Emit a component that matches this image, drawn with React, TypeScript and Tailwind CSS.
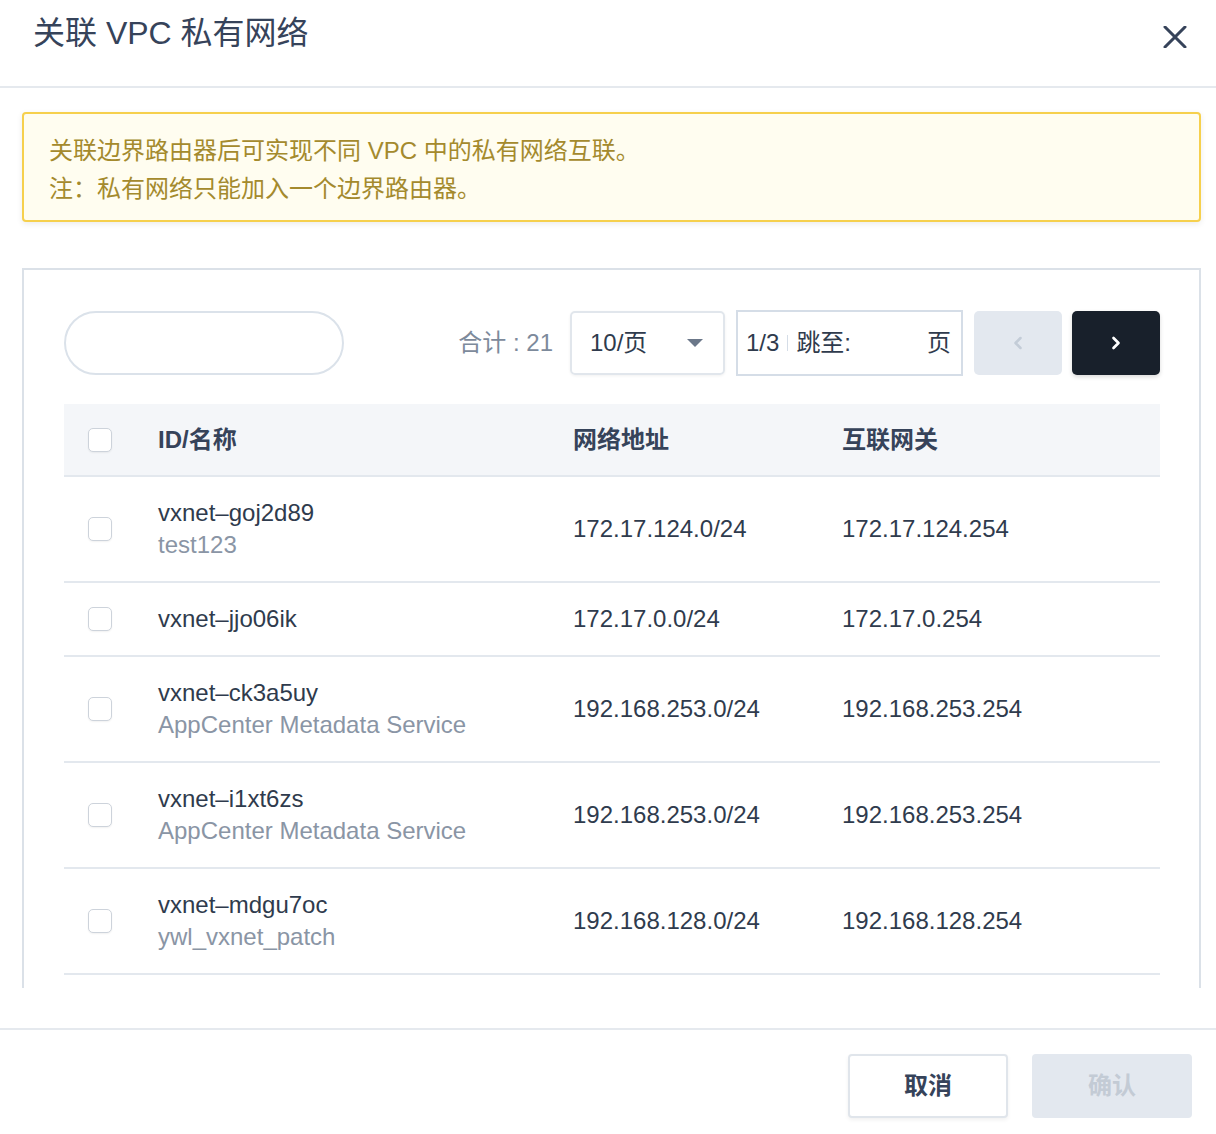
import { ChevronLeft, ChevronRight } from "lucide-react";

type Vxnet = {
  id: string;
  name?: string;
  address: string;
  gateway: string;
};

const vxnets: Vxnet[] = [
  { id: "vxnet–goj2d89", name: "test123", address: "172.17.124.0/24", gateway: "172.17.124.254" },
  { id: "vxnet–jjo06ik", address: "172.17.0.0/24", gateway: "172.17.0.254" },
  { id: "vxnet–ck3a5uy", name: "AppCenter Metadata Service", address: "192.168.253.0/24", gateway: "192.168.253.254" },
  { id: "vxnet–i1xt6zs", name: "AppCenter Metadata Service", address: "192.168.253.0/24", gateway: "192.168.253.254" },
  { id: "vxnet–mdgu7oc", name: "ywl_vxnet_patch", address: "192.168.128.0/24", gateway: "192.168.128.254" },
];

const Checkbox = () => (
  <span className="block h-[24px] w-[24px] rounded-[5px] border-[1.5px] border-[#cdd3db] bg-white shadow-[0_1px_2px_rgba(0,0,0,0.06)]" />
);

const App = () => {
  return (
    <div
      className="w-[1216px] h-[1134px] bg-white text-[#2f3b4d] overflow-hidden"
      style={{ fontFamily: '"Liberation Sans", "Noto Sans CJK SC", sans-serif' }}
    >
      {/* Header */}
      <div className="h-[88px] border-b-2 border-[#e5e9ee] flex items-start justify-between pl-[33px] pr-[25px] pt-[13px]">
        <h1 className="text-[32px] leading-[40px] text-[#36435a]">关联 VPC 私有网络</h1>
        <button className="mt-[9px] p-1">
          <svg width="24" height="22" viewBox="0 0 24 22">
            <path d="M2 1 L22 21 M22 1 L2 21" stroke="#36435a" strokeWidth="3" strokeLinecap="round" />
          </svg>
        </button>
      </div>

      {/* Body */}
      <div className="h-[900px] overflow-hidden pl-[22px] pr-[15px] pt-[24px]">
        <div className="rounded-[4px] border-2 border-[#f6d04d] bg-[#fffdf0] shadow-[0_2px_6px_rgba(0,0,0,0.08)] pl-[25px] pt-[18px] pb-[12px] text-[24px] leading-[38px] text-[#a48a2d]">
          <p>关联边界路由器后可实现不同 VPC 中的私有网络互联。</p>
          <p>注：私有网络只能加入一个边界路由器。</p>
        </div>

        <div className="mt-[46px] border-2 border-[#dbe1e8] pl-[40px] pr-[39px] pt-[40px] pb-[40px]">
          {/* Toolbar */}
          <div className="flex items-center justify-between">
            <input className="w-[280px] h-[64px] rounded-full border-2 border-[#dbe2ea] outline-none px-6 text-[24px]" />
            <div className="flex items-center">
              <span className="text-[24px] text-[#7d8a9b] mr-[17px]">合计 : 21</span>
              <div className="w-[155px] h-[64px] rounded-[5px] border-2 border-[#e1e6ec] shadow-[0_1px_3px_rgba(0,0,0,0.06)] flex items-center justify-between pl-[18px] pr-[20px]">
                <span className="text-[24px]">10/页</span>
                <svg width="16" height="8" viewBox="0 0 16 8">
                  <polygon points="0,0 16,0 8,8" fill="#6b7789" />
                </svg>
              </div>
              <div className="ml-[11px] w-[227px] h-[66px] border-2 border-[#d5dde7] flex items-center pl-[8px] pr-[10px] text-[24px]">
                <span>1/3</span>
                <span className="mx-[8px] h-[16px] w-[1px] bg-[#d5dde7]" />
                <span>跳至:</span>
                <span className="ml-auto">页</span>
              </div>
              <button className="ml-[11px] w-[88px] h-[64px] rounded-[5px] bg-[#e3e8ef] flex items-center justify-center">
                <ChevronLeft size={20} strokeWidth={3} color="#c3ccd7" />
              </button>
              <button className="ml-[10px] w-[88px] h-[64px] rounded-[5px] bg-[#18202b] shadow-[0_2px_4px_rgba(0,0,0,0.15)] flex items-center justify-center">
                <ChevronRight size={20} strokeWidth={3.2} color="#ffffff" />
              </button>
            </div>
          </div>

          {/* Table */}
          <div className="mt-[28px]">
            <div className="h-[73px] bg-[#f4f6f9] border-b-2 border-[#e3e8ee] flex items-center text-[24px] font-bold text-[#36435a]">
              <div className="w-[94px] pl-[24px]">
                <Checkbox />
              </div>
              <div className="w-[415px]">ID/名称</div>
              <div className="w-[269px]">网络地址</div>
              <div>互联网关</div>
            </div>
            {vxnets.map((v) => (
              <div key={v.id} className="flex items-center border-b-2 border-[#e3e8ee] py-[20px] text-[24px] leading-[32px]">
                <div className="w-[94px] pl-[24px]">
                  <Checkbox />
                </div>
                <div className="w-[415px]">
                  <div>{v.id}</div>
                  {v.name && <div className="text-[#8a95a5]">{v.name}</div>}
                </div>
                <div className="w-[269px]">{v.address}</div>
                <div>{v.gateway}</div>
              </div>
            ))}
          </div>
        </div>
      </div>

      <div className="h-[40px]" />

      {/* Footer */}
      <div className="border-t-2 border-[#e5e9ee] flex justify-end gap-[24px] pt-[24px] pr-[24px]">
        <button className="w-[160px] h-[64px] rounded-[4px] border-2 border-[#e0e5eb] bg-white shadow-[0_2px_4px_rgba(0,0,0,0.06)] text-[24px] font-bold text-[#36435a]">
          取消
        </button>
        <button className="w-[160px] h-[64px] rounded-[4px] bg-[#e3e8ef] text-[24px] font-bold text-[#c3cbd5]">
          确认
        </button>
      </div>
    </div>
  );
};

export default App;
